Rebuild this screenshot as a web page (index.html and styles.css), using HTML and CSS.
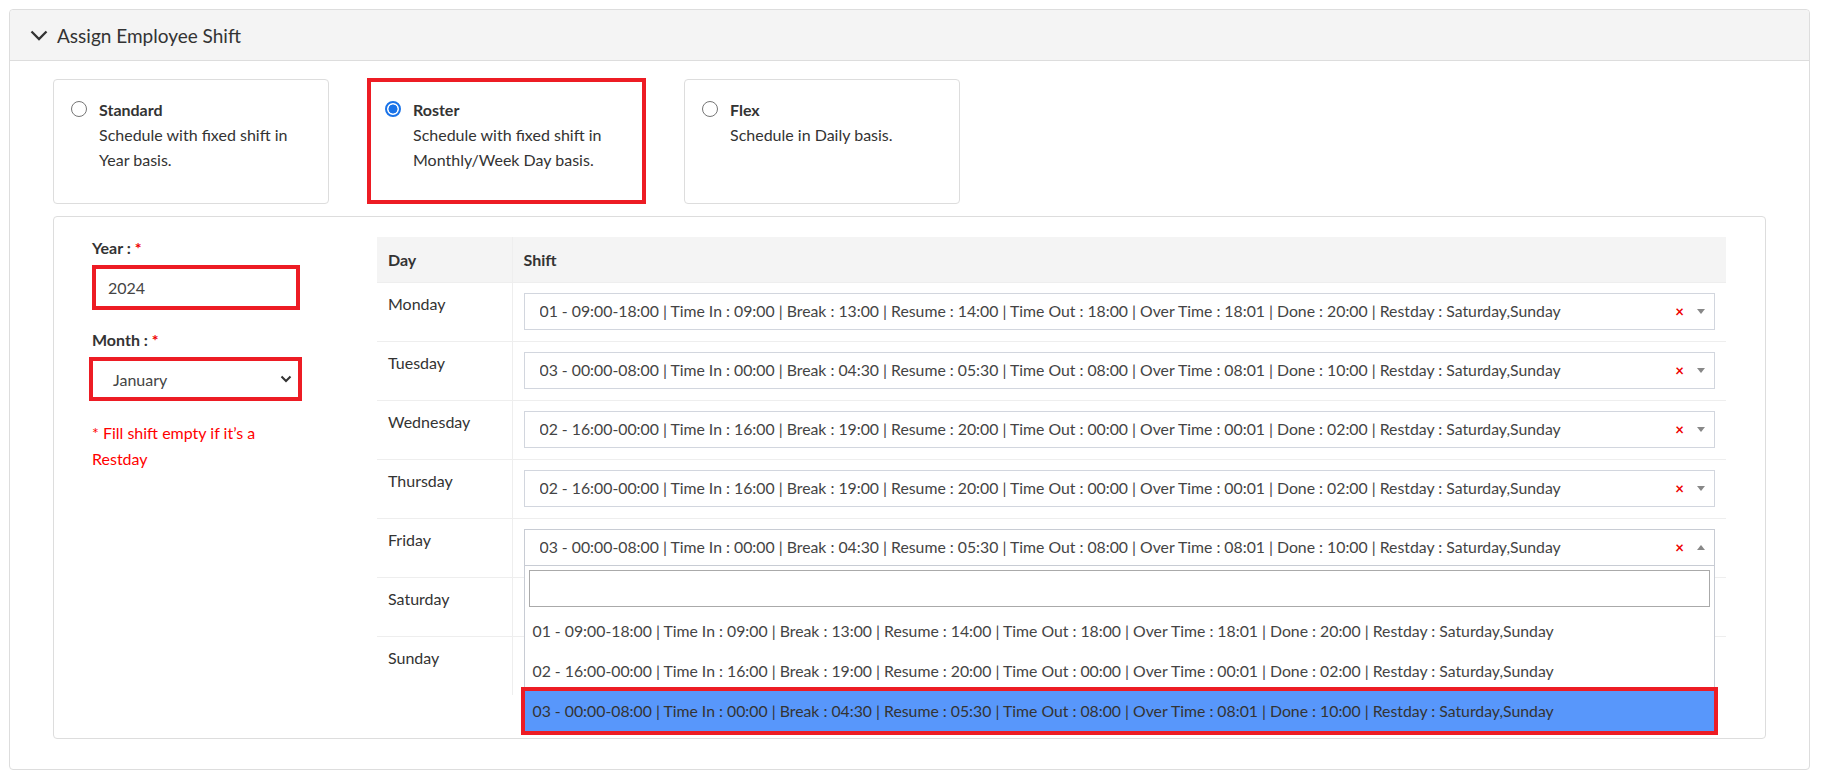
FILE: index.html
```html
<!DOCTYPE html>
<html>
<head>
<meta charset="utf-8">
<link rel="stylesheet" href="styles.css">
</head>
<body>
<div class="panel">
  <div class="panel-head">
    <svg class="chev" width="18" height="11" viewBox="0 0 18 11"><polyline points="1.5,1.5 9,9 16.5,1.5" fill="none" stroke="#333" stroke-width="2.3"/></svg>
    <span>Assign Employee Shift</span>
  </div>
  <div class="panel-body">
    <div class="types">
      <div class="type-card">
        <span class="radio"></span>
        <div class="type-text">
          <div class="type-title">Standard</div>
          <div class="type-desc">Schedule with fixed shift in<br>Year basis.</div>
        </div>
      </div>
      <div class="type-card type-card--marked">
        <span class="radio radio--on"></span>
        <div class="type-text">
          <div class="type-title">Roster</div>
          <div class="type-desc">Schedule with fixed shift in<br>Monthly/Week Day basis.</div>
        </div>
      </div>
      <div class="type-card">
        <span class="radio"></span>
        <div class="type-text">
          <div class="type-title">Flex</div>
          <div class="type-desc">Schedule in Daily basis.</div>
        </div>
      </div>
    </div>

    <div class="roster">
      <div class="left-col">
        <div class="field-label">Year : <span class="req">*</span></div>
        <div class="year-input">2024</div>
        <div class="field-label">Month : <span class="req">*</span></div>
        <div class="month-select">
          <span>January</span>
          <svg width="12" height="8" viewBox="0 0 12 8"><polyline points="1.5,1.5 6,6 10.5,1.5" fill="none" stroke="#333" stroke-width="2"/></svg>
        </div>
        <div class="note">* Fill shift empty if it’s a<br>Restday</div>
      </div>

      <div class="table-col">
        <table class="shift-table">
          <thead>
            <tr><th class="col-day">Day</th><th>Shift</th></tr>
          </thead>
          <tbody>
            <tr>
              <td class="col-day">Monday</td>
              <td class="col-shift"><div class="s2"><span class="s2-text">01 - 09:00-18:00 | Time In : 09:00 | Break : 13:00 | Resume : 14:00 | Time Out : 18:00 | Over Time : 18:01 | Done : 20:00 | Restday : Saturday,Sunday</span><span class="s2-clear">×</span><span class="s2-arrow"></span></div></td>
            </tr>
            <tr>
              <td class="col-day">Tuesday</td>
              <td class="col-shift"><div class="s2"><span class="s2-text">03 - 00:00-08:00 | Time In : 00:00 | Break : 04:30 | Resume : 05:30 | Time Out : 08:00 | Over Time : 08:01 | Done : 10:00 | Restday : Saturday,Sunday</span><span class="s2-clear">×</span><span class="s2-arrow"></span></div></td>
            </tr>
            <tr>
              <td class="col-day">Wednesday</td>
              <td class="col-shift"><div class="s2"><span class="s2-text">02 - 16:00-00:00 | Time In : 16:00 | Break : 19:00 | Resume : 20:00 | Time Out : 00:00 | Over Time : 00:01 | Done : 02:00 | Restday : Saturday,Sunday</span><span class="s2-clear">×</span><span class="s2-arrow"></span></div></td>
            </tr>
            <tr>
              <td class="col-day">Thursday</td>
              <td class="col-shift"><div class="s2"><span class="s2-text">02 - 16:00-00:00 | Time In : 16:00 | Break : 19:00 | Resume : 20:00 | Time Out : 00:00 | Over Time : 00:01 | Done : 02:00 | Restday : Saturday,Sunday</span><span class="s2-clear">×</span><span class="s2-arrow"></span></div></td>
            </tr>
            <tr>
              <td class="col-day">Friday</td>
              <td class="col-shift">
                <div class="s2-wrap">
                  <div class="s2 s2--open"><span class="s2-text">03 - 00:00-08:00 | Time In : 00:00 | Break : 04:30 | Resume : 05:30 | Time Out : 08:00 | Over Time : 08:01 | Done : 10:00 | Restday : Saturday,Sunday</span><span class="s2-clear">×</span><span class="s2-arrow s2-arrow--up"></span></div>
                  <div class="s2-drop">
                    <div class="s2-search"><div class="s2-search-field"></div></div>
                    <div class="s2-opt">01 - 09:00-18:00 | Time In : 09:00 | Break : 13:00 | Resume : 14:00 | Time Out : 18:00 | Over Time : 18:01 | Done : 20:00 | Restday : Saturday,Sunday</div>
                    <div class="s2-opt">02 - 16:00-00:00 | Time In : 16:00 | Break : 19:00 | Resume : 20:00 | Time Out : 00:00 | Over Time : 00:01 | Done : 02:00 | Restday : Saturday,Sunday</div>
                    <div class="s2-opt s2-opt--hl">03 - 00:00-08:00 | Time In : 00:00 | Break : 04:30 | Resume : 05:30 | Time Out : 08:00 | Over Time : 08:01 | Done : 10:00 | Restday : Saturday,Sunday</div>
                  </div>
                </div>
              </td>
            </tr>
            <tr>
              <td class="col-day">Saturday</td>
              <td class="col-shift"><div class="s2"><span class="s2-text"></span><span class="s2-arrow"></span></div></td>
            </tr>
            <tr>
              <td class="col-day">Sunday</td>
              <td class="col-shift"><div class="s2"><span class="s2-text"></span><span class="s2-arrow"></span></div></td>
            </tr>
          </tbody>
        </table>
      </div>
    </div>
  </div>
</div>
</body>
</html>
```

FILE: styles.css
```css
* { box-sizing: border-box; }

body {
  margin: 0;
  padding: 9px 11px 11px 9px;
  background: #fff;
  color: #333;
  font-family: Lato, "Liberation Sans", sans-serif;
  font-size: 16px;
}

.panel {
  border: 1px solid #ddd;
  border-radius: 4px;
  background: #fff;
}

.panel-head {
  height: 51px;
  background: #f4f4f4;
  border-bottom: 1px solid #ddd;
  border-radius: 4px 4px 0 0;
  display: flex;
  align-items: center;
  gap: 9px;
  padding-left: 20px;
  font-size: 19px;
  color: #333;
}

.chev { display: block; }

.panel-body {
  padding: 18px 43px 30px 43px;
}

/* schedule type cards */
.types {
  display: flex;
  gap: 38px;
  align-items: flex-start;
}

.type-card {
  width: 276px;
  height: 125px;
  border: 1px solid #ddd;
  border-radius: 4px;
  padding: 17px 10px 0 17px;
  display: flex;
  gap: 12px;
}

.type-card--marked {
  width: 279px;
  height: 126px;
  margin-top: -1px;
  border: 4px solid #ed1c24;
  border-radius: 0;
  padding: 15px 10px 0 14px;
}

.radio {
  flex: none;
  width: 16px;
  height: 16px;
  margin-top: 4px;
  border: 1.5px solid #767676;
  border-radius: 50%;
  background: #fff;
}

.radio--on {
  border: 2px solid #1a73e8;
  background: radial-gradient(circle at center, #1a73e8 0, #1a73e8 4.2px, #fff 4.8px);
}

.type-title {
  font-weight: bold;
  line-height: 25px;
}

.type-desc {
  line-height: 25px;
}

/* roster panel */
.roster {
  margin-top: 12px;
  border: 1px solid #ddd;
  border-radius: 4px;
  display: grid;
  grid-template-columns: 285px 1fr;
  padding: 20px 39px 43px 38px;
}

.field-label {
  font-weight: bold;
  line-height: 22px;
  margin-bottom: 6px;
}

.req { color: #ee0000; }

.year-input {
  width: 208px;
  height: 45px;
  border: 4px solid #ed1c24;
  padding-left: 12px;
  display: flex;
  align-items: center;
  color: #444;
  margin-bottom: 19px;
}

.month-select {
  width: 213px;
  height: 44px;
  margin-left: -3px;
  border: 4px solid #ed1c24;
  padding: 0 6px 0 20px;
  display: flex;
  align-items: center;
  justify-content: space-between;
  color: #444;
}

.month-select svg { display: block; }

.note {
  margin-top: 19px;
  color: #ff0000;
  line-height: 26px;
}

/* shift table */
.shift-table {
  width: 100%;
  border-collapse: collapse;
}

.shift-table th {
  height: 45px;
  background: #f4f4f4;
  text-align: left;
  padding: 0 11px;
  font-weight: bold;
}

.shift-table td {
  border-top: 1px solid #eeeeee;
  vertical-align: top;
  padding: 10px 11px 11px 11px;
  line-height: 22px;
}

.shift-table .col-day {
  width: 135px;
  border-right: 1px solid #eeeeee;
  color: #333;
}

.shift-table th.col-day { border-right: 1px solid #eeeeee; }

.s2-wrap { position: relative; }

.s2 {
  height: 37px;
  border: 1px solid #d2d6de;
  background: #fff;
  display: flex;
  align-items: center;
  padding: 0 7px 0 15px;
  color: #444;
  white-space: nowrap;
  font-size: 15.8px;
}

.s2--open { border-color: #c8ccd4; }

.s2-text {
  flex: 1;
  overflow: hidden;
}

.s2-clear {
  color: #ee0000;
  font-weight: bold;
  font-size: 15px;
  margin-right: 13px;
}

.s2-arrow {
  width: 0;
  height: 0;
  border-left: 4px solid transparent;
  border-right: 4px solid transparent;
  border-top: 5px solid #888;
  margin-right: 2px;
}

.s2-arrow--up {
  border-top: none;
  border-bottom: 5px solid #888;
}

.s2-drop {
  position: absolute;
  top: 100%;
  left: 0;
  right: 0;
  z-index: 5;
  background: #fff;
  border: 1px solid #c8ccd4;
  border-top: none;
}

.s2-search {
  padding: 4px;
}

.s2-search-field {
  height: 37px;
  border: 1px solid #aaa;
  background: #fff;
}

.s2-opt {
  height: 40px;
  line-height: 40px;
  padding: 0 8px;
  color: #444;
  white-space: nowrap;
  font-size: 15.8px;
}

.s2-opt--hl {
  background: #5897fb;
  color: #333;
  outline: 4px solid #ed1c24;
}
```
